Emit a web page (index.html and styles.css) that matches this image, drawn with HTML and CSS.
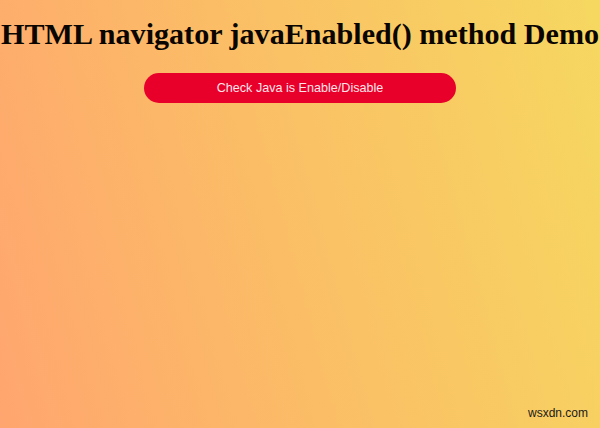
FILE: index.html
```html
<!DOCTYPE html>
<html>
<head>
<meta charset="utf-8">
<link rel="stylesheet" href="styles.css">
</head>
<body>
<main class="page">
  <h1 class="title">HTML navigator javaEnabled() method Demo</h1>
  <button class="btn" type="button">Check Java is Enable/Disable</button>
  <div class="spacer"></div>
  <footer class="mark">wsxdn.com</footer>
</main>
</body>
</html>
```
FILE: styles.css
```css
html, body {
  margin: 0;
  padding: 0;
  height: 100%;
}
body {
  background: linear-gradient(75deg, #ffa56f 0%, #fbbd66 45%, #f6d860 100%);
  overflow: hidden;
}
.page {
  height: 428px;
  display: flex;
  flex-direction: column;
  align-items: center;
  box-sizing: border-box;
  padding: 0 8px;
}
.title {
  margin: 16px 0 0 0;
  font-family: "Liberation Serif", "Times New Roman", serif;
  font-weight: bold;
  font-size: 30.1px;
  line-height: 36px;
  color: #0a0500;
  white-space: nowrap;
  text-align: center;
}
.btn {
  margin-top: 21px;
  width: 312px;
  height: 30px;
  border: none;
  border-radius: 15px;
  background: #e8002b;
  color: #ffe4e9;
  font-family: "Liberation Sans", Arial, sans-serif;
  font-size: 12.6px;
  padding: 0;
}
.spacer {
  flex: 1;
}
.mark {
  align-self: flex-end;
  margin: 0 4px 8px 0;
  font-family: "Liberation Sans", Arial, sans-serif;
  font-size: 12px;
  color: #1a1a1a;
}
```
